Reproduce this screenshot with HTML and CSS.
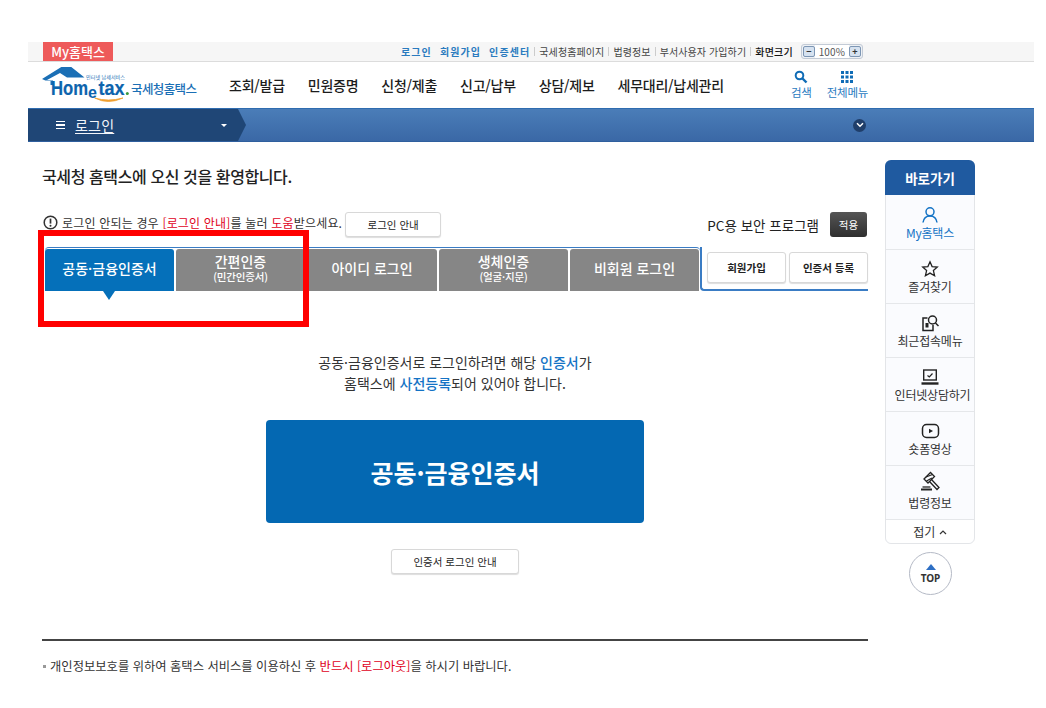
FILE: index.html
```html
<!DOCTYPE html>
<html lang="ko">
<head>
<meta charset="utf-8">
<title>국세청 홈택스</title>
<link rel="stylesheet" href="styles.css">
</head>
<body>
<div class="page">
  <div class="topbar">
    <div class="mytab">My홈택스</div>
    <div class="toplinks">
      <a class="tl-blue">로그인</a>
      <a class="tl-blue">회원가입</a>
      <a class="tl-blue tl-last">인증센터</a>
      <i class="sep"></i><a>국세청홈페이지</a>
      <i class="sep"></i><a>법령정보</a>
      <i class="sep"></i><a>부서사용자 가입하기</a>
      <i class="sep"></i><a class="tl-dark">화면크기</a>
      <div class="zoomctl"><b class="zbtn">−</b><span>100%</span><b class="zbtn">+</b></div>
    </div>
  </div>
  <header class="header">
    <div class="logo">
      <svg class="logo-mark" width="90" height="38" viewBox="0 0 90 38">
        <path d="M0 13 19.300 1H29.300L42.500 11.500H25L18 7 5 14H8.500V14.500H11V19H8.500V14.500H3.300Z" fill="#1b6fb5"/>
        <path d="M52.700 32Q66 39 81 32 66 36 52.700 32Z" fill="#f0a030" stroke="#f0a030" stroke-width=".8"/>
        <text x="9" y="28.500" class="lg-a" textLength="37" lengthAdjust="spacingAndGlyphs">Hom</text>
        <text x="46" y="31.500" class="lg-e">e</text>
        <text x="56.500" y="28.500" class="lg-a" textLength="26" lengthAdjust="spacingAndGlyphs">tax</text>
        <circle cx="85.300" cy="27.500" r="1.500" fill="#3b9a3b"/>
        <text x="44" y="12.500" class="lg-s" textLength="39" lengthAdjust="spacingAndGlyphs">인터넷 납세서비스</text>
      </svg>
      <span class="logo-name">국세청홈택스</span>
    </div>
    <nav class="gnb">
      <a>조회/발급</a><a>민원증명</a><a>신청/제출</a><a>신고/납부</a><a>상담/제보</a><a>세무대리/납세관리</a>
    </nav>
    <div class="tools">
      <div class="tool tool-search">
        <svg width="14" height="14" viewBox="0 0 14 14"><circle cx="5.500" cy="5.500" r="3.800" fill="none" stroke="#0f6cb6" stroke-width="2"/><path d="M8.500 8.500 12.500 12.500" stroke="#0f6cb6" stroke-width="2.400"/></svg>
        <span>검색</span>
      </div>
      <div class="tool tool-all">
        <svg width="14" height="14" viewBox="0 0 14 14" fill="#0f6cb6"><rect x="1" y="1" width="3" height="3"/><rect x="5.500" y="1" width="3" height="3"/><rect x="10" y="1" width="3" height="3"/><rect x="1" y="5.500" width="3" height="3"/><rect x="5.500" y="5.500" width="3" height="3"/><rect x="10" y="5.500" width="3" height="3"/><rect x="1" y="10" width="3" height="3"/><rect x="5.500" y="10" width="3" height="3"/><rect x="10" y="10" width="3" height="3"/></svg>
        <span>전체메뉴</span>
      </div>
    </div>
  </header>
  <div class="locbar">
    <div class="loc-left">
      <span class="burger"><i></i><i></i><i></i></span>
      <span class="loc-title">로그인</span>
      <span class="loc-caret"></span>
    </div>
    <span class="loc-round"><svg width="8" height="6" viewBox="0 0 8 6"><path d="M1 1.200 4 4.200 7 1.200" fill="none" stroke="#fff" stroke-width="1.500"/></svg></span>
  </div>
  <div class="body">
    <main class="content">
      <h1 class="welcome">국세청 홈택스에 오신 것을 환영합니다.</h1>
      <div class="helprow">
        <div class="helpleft">
          <svg width="15" height="15" viewBox="0 0 15 15"><circle cx="7.500" cy="7.500" r="6.300" fill="none" stroke="#333" stroke-width="1.500"/><path d="M7.500 3.600v5" stroke="#333" stroke-width="1.700"/><circle cx="7.500" cy="10.800" r="1" fill="#333"/></svg>
          <p class="helptext">로그인 안되는 경우 <em>[로그인 안내]</em>를 눌러 <em>도움</em>받으세요.</p>
          <button class="btn btn-guide">로그인 안내</button>
        </div>
        <div class="helpright">
          <span class="pc">PC용 보안 프로그램</span>
          <button class="btn-apply">적용</button>
        </div>
      </div>
      <div class="tabs">
        <div class="tablist">
          <div class="tab tab-on">공동·금융인증서</div>
          <div class="tab tab-w2">간편인증<small>(민간인증서)</small></div>
          <div class="tab tab-w3">아이디 로그인</div>
          <div class="tab tab-w4">생체인증<small>(얼굴·지문)</small></div>
          <div class="tab tab-w5">비회원 로그인</div>
        </div>
        <div class="tabside">
          <button class="btn btn-side">회원가입</button>
          <button class="btn btn-side btn-side2">인증서 등록</button>
        </div>
      </div>
      <p class="notice">공동·금융인증서로 로그인하려면 해당 <strong>인증서</strong>가<br>홈택스에 <strong>사전등록</strong>되어 있어야 합니다.</p>
      <button class="bigbtn">공동·금융인증서</button>
      <div class="guidewrap"><button class="btn btn-cert">인증서 로그인 안내</button></div>
      <div class="foot">
        <span class="dot"></span><p>개인정보보호를 위하여 홈택스 서비스를 이용하신 후 <em>반드시 [로그아웃]</em>을 하시기 바랍니다.</p>
      </div>
    </main>
    <aside class="side">
      <div class="qbox">
        <div class="qhead">바로가기</div>
        <div class="qitem qblue">
          <svg width="18" height="18" viewBox="0 0 18 18" fill="none" stroke="#1473c5" stroke-width="1.500"><circle cx="9" cy="5.800" r="4"/><path d="M2 16.500c.6-4 3.200-6.600 7-6.600s6.400 2.600 7 6.600"/></svg>
          <span>My홈택스</span>
        </div>
        <div class="qitem">
          <svg width="18" height="18" viewBox="0 0 18 18" fill="none" stroke="#222" stroke-width="1.300"><path d="M9 1.800 11.100 6.600 16.300 7.100 12.400 10.600 13.600 15.800 9 13.100 4.400 15.800 5.600 10.600 1.700 7.100 6.900 6.600Z"/></svg>
          <span>즐겨찾기</span>
        </div>
        <div class="qitem">
          <svg width="19" height="18" viewBox="0 0 19 18" fill="none" stroke="#222" stroke-width="1.500"><path d="M6.500 4H2v12.500h10V11"/><circle cx="11.500" cy="6" r="4"/><path d="M14.500 9 17.500 12"/><path d="M4.500 9h3v4.500h-3z" fill="#222" stroke="none"/></svg>
          <span>최근접속메뉴</span>
        </div>
        <div class="qitem qshift">
          <svg width="20" height="18" viewBox="0 0 20 18" fill="none" stroke="#222" stroke-width="1.400"><rect x="3.700" y="2" width="12.600" height="10"/><path d="M7.500 7.500 9.300 9 12.500 5.500" stroke-width="1.200"/><path d="M1.500 15.500h17" stroke-width="2.400"/></svg>
          <span>인터넷상담하기</span>
        </div>
        <div class="qitem">
          <svg width="19" height="18" viewBox="0 0 19 18" fill="none" stroke="#222" stroke-width="1.500"><rect x="1.500" y="2.500" width="16" height="13" rx="4"/><path d="M8 6.700v4.600L12 9Z" fill="#222" stroke="none"/></svg>
          <span>숏폼영상</span>
        </div>
        <div class="qitem">
          <svg class="gavel" width="22" height="20" viewBox="0 0 22 20" fill="none" stroke="#222" stroke-width="1.300"><path d="M5 8 11.500 1.500 15.500 5.500 9 12Z"/><path d="M7 6 13.500 3.500M7.500 10 13 7"/><path d="M12.500 8.500 20 16.500 18 18.500 10.500 10.500"/><path d="M2 18.500h11" stroke-width="2"/><path d="M3.500 16h8"/></svg>
          <span>법령정보</span>
        </div>
        <div class="qfold">접기 <svg width="8" height="5" viewBox="0 0 8 5"><path d="M1 4 4 1 7 4" fill="none" stroke="#333" stroke-width="1.200"/></svg></div>
      </div>
      <div class="top"><i></i>TOP</div>
    </aside>
  </div>
</div>
<div class="redbox"></div>
</body>
</html>
```
FILE: styles.css
```css
* { box-sizing: border-box; }
html, body { margin: 0; padding: 0; background: #fff; }
body { padding-top: 42px; font-family: "Noto Sans CJK KR", "Noto Sans", sans-serif; color: #222; width: 1046px; height: 708px; overflow: hidden; position: relative; }
em { font-style: normal; color: #e0001b; }
p, h1 { margin: 0; font-weight: 400; }
button { font-family: inherit; cursor: pointer; }
.page { margin-left: 28px; width: 1006px; }

.topbar { height: 20px; display: flex; background: #f6f6f6; border-bottom: 1px solid #dcdcdc; padding-left: 15px; }
.mytab { width: 70px; height: 19px; background: #ee5a5a; color: #fff; font-size: 13px; font-weight: 500; line-height: 19px; text-align: center; }
.toplinks { display: flex; align-items: center; margin-left: 288px; font-size: 10px; letter-spacing: .1px; color: #444; white-space: nowrap; }
.toplinks .tl-blue { color: #2a7bbf; font-weight: 700; letter-spacing: 1.1px; margin-right: 8px; }
.toplinks .tl-last { margin-right: 0; }
.toplinks .tl-dark { color: #111; font-weight: 500; letter-spacing: .2px; }
.sep { width: 1px; height: 9px; background: #ccc; margin: 0 4px; }
.zoomctl { display: flex; align-items: center; justify-content: space-between; width: 62px; height: 15px; margin-left: 8px; border: 1px solid #c3cbd6; border-radius: 3px; padding: 0 1px; font-size: 10px; color: #555; background: #eef1f5; }
.zoomctl span { background: #fff; flex: 1; text-align: center; line-height: 13px; }
.zbtn { width: 12px; height: 11px; background: #d6e2f0; border: 1px solid #7d96b4; border-radius: 2px; font-size: 9px; line-height: 9px; text-align: center; color: #333; }

.header { height: 46px; display: flex; align-items: center; padding-left: 14px; }
.logo { width: 187px; height: 46px; display: flex; align-items: flex-start; }
.logo-mark { margin-top: 4px; margin-right: -1px; flex: none; }
.lg-a { font: 700 19.500px "Liberation Sans", sans-serif; fill: #0d64ad; stroke: #0d64ad; stroke-width: .2px; }
.lg-e { font: 700 16px "Liberation Sans", sans-serif; fill: #0d64ad; }
.lg-s { font-size: 4.500px; fill: #1b6fb5; }
.logo-name { font-size: 12.500px; font-weight: 500; color: #1b6fb5; letter-spacing: -.6px; margin: 18px 0 0 0; line-height: 18px; white-space: nowrap; }
.gnb { display: flex; gap: 23px; font-size: 14px; font-weight: 500; color: #1c1c1c; letter-spacing: -.25px; white-space: nowrap; }
.tools { display: flex; margin-left: 67px; padding-bottom: 2px; }
.tool { display: flex; flex-direction: column; align-items: center; font-size: 11.500px; color: #2a7bbf; letter-spacing: -.2px; line-height: 14px; gap: 1px; }
.tool-all { margin-left: 15px; }

.locbar { height: 34px; display: flex; align-items: center; justify-content: space-between; background: linear-gradient(#4a7db8, #3a68a6); border-top: 1px solid #2e6cb0; border-bottom: 1px solid #2f5f9e; padding-right: 168px; }
.loc-left { width: 218px; height: 32px; display: flex; align-items: center; padding-left: 28px; background: #1f4676; clip-path: polygon(0 0, 210px 0, 218px 50%, 210px 100%, 0 100%); color: #fff; }
.burger { display: flex; flex-direction: column; gap: 2px; width: 9px; }
.burger i { display: block; height: 1.500px; background: #fff; }
.loc-title { font-size: 14px; margin-left: 10px; letter-spacing: .2px; color: #f2f5fa; text-decoration: underline; text-underline-offset: 2px; text-decoration-thickness: 1px; }
.loc-caret { width: 0; height: 0; border: 3.500px solid transparent; border-top: 3.500px solid #fff; border-bottom: 0; margin-left: 107px; }
.loc-round { width: 13px; height: 13px; border-radius: 50%; background: #1f3e6a; display: flex; align-items: center; justify-content: center; }

.body { display: flex; }
.content { width: 840px; padding-left: 14px; }
.welcome { font-size: 16px; font-weight: 500; letter-spacing: -.4px; color: #222; height: 24px; line-height: 24px; margin-top: 22px; }
.helprow { display: flex; justify-content: space-between; margin-top: 24px; height: 28px; width: 825px; }
.helpleft { display: flex; align-items: flex-start; padding-top: 1px; }
.helpleft svg { margin: 2px 0 0 1px; }
.helptext { font-size: 12px; color: #333; margin: 1px 0 0 4px; line-height: 18px; letter-spacing: .18px; }
.btn { background: #fff; border: 1px solid #d8d8d8; border-radius: 3px; color: #222; box-shadow: 0 1px 1px #ddd; padding: 0; }
.btn-guide { width: 96px; height: 25px; margin: -1px 0 0 3px; font-size: 10.500px; }
.helpright { display: flex; align-items: flex-start; }
.pc { font-size: 13.500px; color: #222; line-height: 26px; margin-right: 11px; }
.btn-apply { width: 37px; height: 25px; background: linear-gradient(#555, #2f2f2f); color: #fff; border: 0; border-radius: 3px; font-size: 10.500px; padding: 0; }

.tabs { display: flex; width: 826px; height: 44px; margin-top: 7px; }
.tablist { width: 656px; margin-left: 3px; height: 44px; display: flex; border-top: 1px solid #3a7cc4; border-radius: 4px 4px 0 0; padding-top: 1px; gap: 2px; }
.tab { height: 42px; background: #868686; color: #fff; font-size: 14px; font-weight: 500; display: flex; flex-direction: column; align-items: center; justify-content: center; line-height: 18px; border-radius: 3px 3px 0 0; padding-bottom: 5px; }
.tab small { font-size: 10.500px; line-height: 12px; letter-spacing: -.2px; font-weight: 500; margin-top: 1px; }
.tab-on { width: 129px; background: #0570ba; position: relative; }
.tab-on::after { content: ""; position: absolute; left: 58px; top: 42px; border: 6.500px solid transparent; border-top: 9px solid #0570ba; border-bottom: 0; }
.tab-w2 { width: 129px; }
.tab-w3 { width: 130px; }
.tab-w4 { width: 129px; }
.tab-w5 { width: 129px; }
.tabside { flex: 1; display: flex; border-bottom: 2px solid #3a7cc4; border-left: 2px solid #3a7cc4; border-bottom-left-radius: 4px; padding: 5px 0 0 5px; gap: 3px; height: 44px; }
.btn-side { width: 79px; height: 31px; font-size: 10.500px; font-weight: 700; color: #222; }

.notice { margin-top: 61px; width: 826px; text-align: center; font-size: 14px; line-height: 21px; color: #333; }
.notice strong { color: #1473c5; font-weight: 500; }
.bigbtn { display: block; width: 378px; height: 103px; margin: 26px 0 0 224px; background: #0468b2; color: #fff; border: 0; border-radius: 4px; font-size: 25px; font-weight: 700; padding: 0; }
.guidewrap { width: 826px; display: flex; justify-content: center; margin-top: 26px; }
.btn-cert { width: 128px; height: 25px; font-size: 10.500px; }
.foot { width: 826px; margin-top: 65px; border-top: 2px solid #444; display: flex; align-items: center; padding-top: 16px; font-size: 12.300px; color: #333; }
.foot p { margin-left: 4px; line-height: 18px; white-space: nowrap; }
.dot { width: 3px; height: 3px; margin-left: 1px; background: #999; }

.side { width: 90px; margin-left: 17px; padding-top: 18px; }
.qbox { width: 90px; border: 1px solid #e3e5e8; border-radius: 6px; background: #fafbfe; }
.qhead { margin: -1px -1px 0; height: 35px; background: #1f5aa0; color: #fff; font-size: 13.500px; font-weight: 700; line-height: 36px; text-align: center; border-radius: 6px 6px 0 0; }
.qitem { height: 54px; display: flex; flex-direction: column; align-items: center; justify-content: center; border-bottom: 1px solid #e5e7ea; font-size: 12px; color: #333; letter-spacing: -.2px; line-height: 15px; white-space: nowrap; gap: 1px; }
.qhead + .qitem { height: 55px; padding-top: 2px; }
.qblue { color: #1473c5; }
.qshift span { margin-left: 5px; }
.gavel { margin: -4px 0 3px; }
.qfold { height: 23px; background: #fff; border-radius: 0 0 6px 6px; text-align: center; font-size: 12px; line-height: 24px; color: #333; }
.qfold svg { vertical-align: 2px; }
.top { width: 43px; height: 43px; margin: 8px 0 0 24px; border: 1px solid #b5bac6; border-radius: 50%; background: #fff; display: flex; flex-direction: column; align-items: center; justify-content: center; font: 700 10px "Noto Sans", sans-serif; color: #333; line-height: 11px; gap: 3px; }
.top i { width: 0; height: 0; border: 5px solid transparent; border-bottom: 6px solid #2e6fc4; border-top: 0; }

.redbox { position: absolute; left: 38px; top: 230px; width: 271px; height: 97px; border: 6px solid #f00; pointer-events: none; }
```
